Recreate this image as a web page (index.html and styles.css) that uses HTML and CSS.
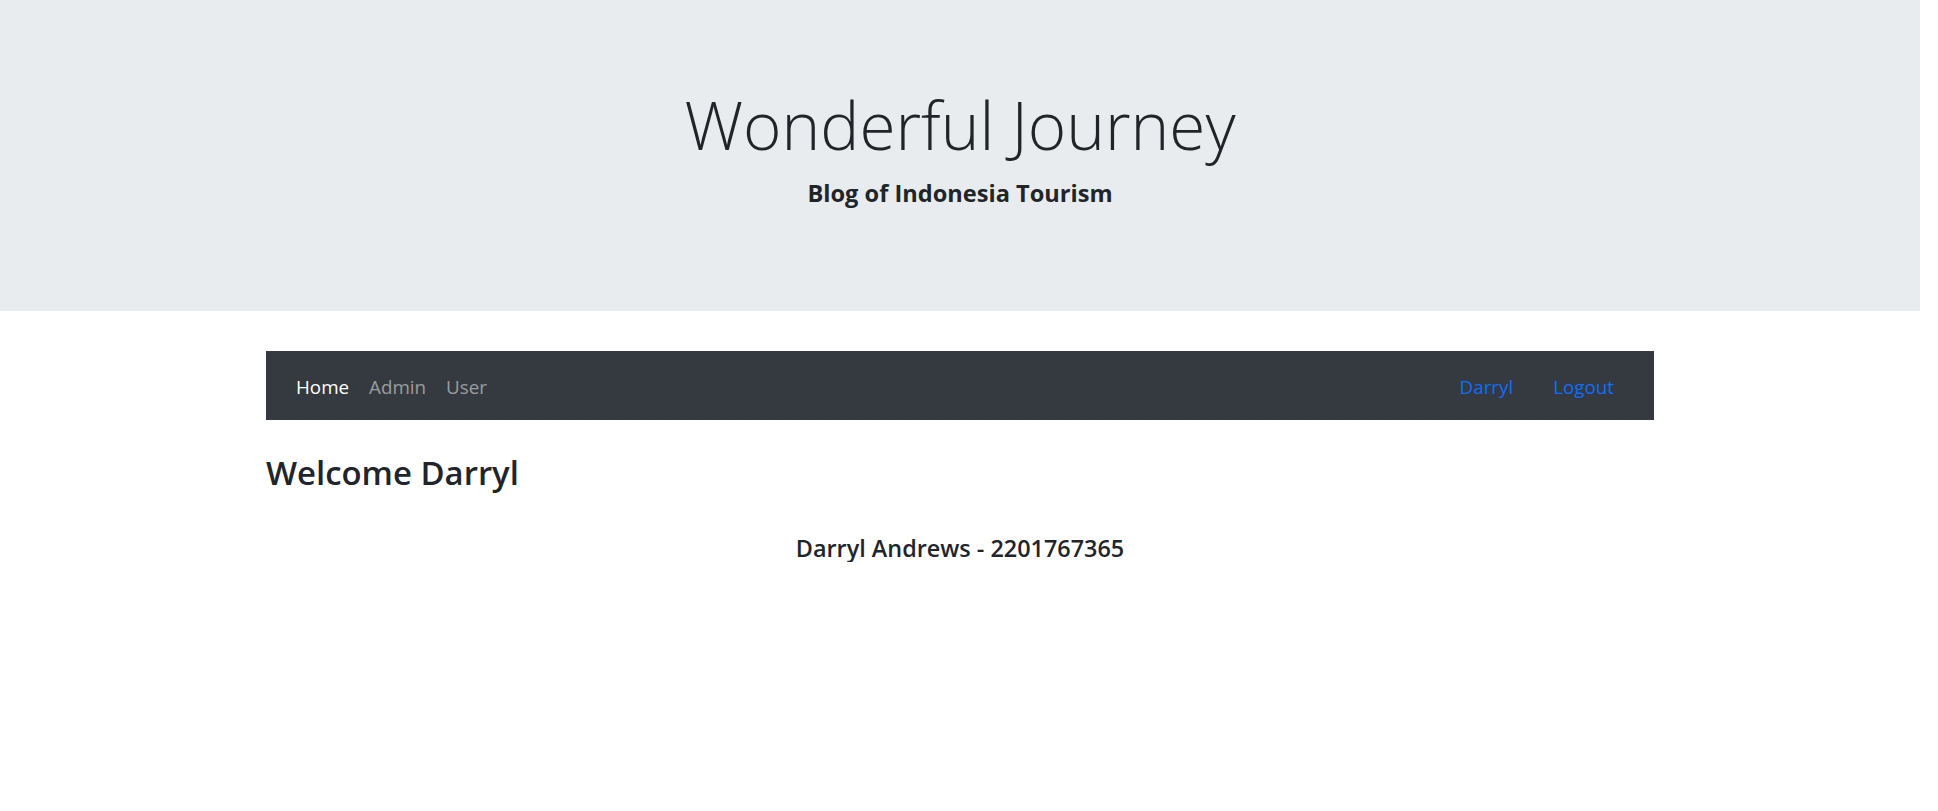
FILE: index.html
```html
<!DOCTYPE html>
<html>
<head>
<meta charset="utf-8">
<title>Wonderful Journey</title>
<link rel="stylesheet" href="styles.css">
</head>
<body>
<div class="page">
  <header class="jumbotron">
    <h1 class="title">Wonderful Journey</h1>
    <h5 class="subtitle">Blog of Indonesia Tourism</h5>
  </header>
  <div class="container">
    <nav class="navbar">
      <ul class="nav-left">
        <li><a class="nav-link active" href="#">Home</a></li>
        <li><a class="nav-link" href="#">Admin</a></li>
        <li><a class="nav-link" href="#">User</a></li>
      </ul>
      <ul class="nav-right">
        <li><a class="nav-link user" href="#">Darryl</a></li>
        <li><a class="nav-link user" href="#">Logout</a></li>
      </ul>
    </nav>
    <h3 class="welcome">Welcome Darryl</h3>
    <h5 class="identity">Darryl Andrews - 2201767365</h5>
  </div>
</div>
</body>
</html>
```
FILE: styles.css
```css
html, body {
  margin: 0;
  padding: 0;
  background: #fff;
}
body {
  font-family: "Open Sans", "Noto Sans", sans-serif;
  color: #212529;
}
.page {
  width: 1920px;
}
.jumbotron {
  background: #e9ecef;
  height: 311px;
  box-sizing: border-box;
  padding-top: 86px;
  display: flex;
  flex-direction: column;
  align-items: center;
}
.title {
  margin: 0;
  font-size: 65.7px;
  font-weight: 300;
  line-height: 1.2;
}
.subtitle {
  margin: 14px 0 0;
  font-size: 23.6px;
  font-weight: 700;
  line-height: 1.2;
}
.container {
  width: 1388px;
  margin: 40px auto 0;
}
.navbar {
  background: #343a40;
  height: 69px;
  box-sizing: border-box;
  padding: 3px 20px 0;
  display: flex;
  align-items: center;
  justify-content: space-between;
}
.nav-left, .nav-right {
  list-style: none;
  margin: 0;
  padding: 0;
  display: flex;
}
.nav-link {
  display: block;
  font-size: 18.8px;
  line-height: 30px;
  padding: 0 10px;
  color: rgba(255, 255, 255, 0.5);
  text-decoration: none;
}
.nav-link.active {
  color: #fff;
}
.nav-link.user {
  color: #0d6efd;
  padding: 0 20px;
}
.welcome {
  margin: 32.5px 0 0;
  font-size: 32.9px;
  font-weight: 600;
  line-height: 1.2;
}
.identity {
  margin: 42px 0 0;
  font-size: 23.4px;
  font-weight: 600;
  line-height: 1.2;
  text-align: center;
}
```
